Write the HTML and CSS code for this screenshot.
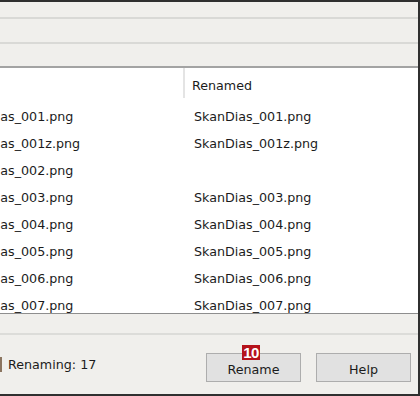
FILE: index.html
```html
<!DOCTYPE html>
<html>
<head>
<meta charset="utf-8">
<link rel="stylesheet" href="styles.css">
</head>
<body>
<div class="window">
  <div class="toolbar">
    <div class="band band1"></div>
    <div class="band band2"></div>
    <div class="band band3"></div>
  </div>
  <div class="list">
    <div class="inner">
      <div class="row header">
        <div class="col orig"></div>
        <div class="col ren head-ren">Renamed</div>
      </div>
      <div class="row"><div class="col orig">SkanDias_001.png</div><div class="col ren">SkanDias_001.png</div></div>
      <div class="row"><div class="col orig">SkanDias_001z.png</div><div class="col ren">SkanDias_001z.png</div></div>
      <div class="row"><div class="col orig">SkanDias_002.png</div><div class="col ren"></div></div>
      <div class="row"><div class="col orig">SkanDias_003.png</div><div class="col ren">SkanDias_003.png</div></div>
      <div class="row"><div class="col orig">SkanDias_004.png</div><div class="col ren">SkanDias_004.png</div></div>
      <div class="row"><div class="col orig">SkanDias_005.png</div><div class="col ren">SkanDias_005.png</div></div>
      <div class="row"><div class="col orig">SkanDias_006.png</div><div class="col ren">SkanDias_006.png</div></div>
      <div class="row"><div class="col orig">SkanDias_007.png</div><div class="col ren">SkanDias_007.png</div></div>
    </div>
  </div>
  <div class="footer">
    <div class="footer-top"></div>
    <div class="footer-main">
      <div class="status"><span class="sep"></span><span>Renaming: 17</span></div>
      <div class="buttons">
        <button class="btn rename">Rename<span class="badge">10</span></button>
        <button class="btn">Help</button>
      </div>
    </div>
  </div>
</div>
</body>
</html>
```
FILE: styles.css
```css
html, body {
  margin: 0;
  padding: 0;
}
body {
  width: 420px;
  height: 396px;
  overflow: hidden;
  font-family: "DejaVu Sans", Verdana, sans-serif;
  font-size: 12.7px;
  color: #1b1b1b;
}
.window {
  box-sizing: border-box;
  width: 420px;
  height: 396px;
  border-top: 2px solid #2f2f2f;
  border-right: 2px solid #2f2f2f;
  border-bottom: 2px solid #2f2f2f;
  background: #f0efec;
  display: flex;
  flex-direction: column;
}
.toolbar {
  display: flex;
  flex-direction: column;
}
.band {
  border-bottom: 2px solid #d9d9d6;
}
.band1 { height: 15px; }
.band2 { height: 23px; }
.band3 { height: 22px; border-bottom: 2px solid #a3a3a3; }
.list {
  background: #fff;
  height: 245px;
  overflow: hidden;
  border-bottom: 1px solid #8e8e8e;
}
.inner {
  margin-left: -50px;
}
.row {
  display: flex;
  height: 27px;
  align-items: center;
  white-space: nowrap;
}
.row.header {
  height: 32px;
  margin-bottom: 3px;
}
.col.orig {
  width: 235px;
  flex: none;
  padding-left: 6px;
  box-sizing: border-box;
}
.header .col.orig {
  height: 30px;
  border-right: 2px solid #e4e4e4;
  align-self: flex-start;
}
.col.ren {
  padding-left: 9px;
}
.header .head-ren {
  padding-left: 7px;
  padding-top: 3px;
}
.footer {
  flex: 1;
  display: flex;
  flex-direction: column;
}
.footer-top {
  height: 19px;
  border-bottom: 2px solid #dcdcd9;
}
.footer-main {
  flex: 1;
  display: flex;
  align-items: flex-start;
  justify-content: space-between;
  padding-top: 18px;
}
.status {
  display: flex;
  align-items: center;
  gap: 6px;
  padding-top: 4px;
}
.sep {
  width: 2px;
  height: 15px;
  background: #8b7560;
}
.buttons {
  display: flex;
  gap: 15px;
  padding-right: 7px;
}
.btn {
  position: relative;
  width: 95px;
  height: 29px;
  box-sizing: border-box;
  border: 1px solid #adadad;
  background: #e1e1e1;
  font-family: "DejaVu Sans", Verdana, sans-serif;
  font-size: 12.7px;
  color: #1b1b1b;
  padding: 3px 0 0 0;
  margin: 0;
}
.badge {
  position: absolute;
  left: 35px;
  top: -9px;
  width: 18px;
  height: 15px;
  background: #b5121b;
  color: #fff;
  font-family: "Liberation Sans", Arial, sans-serif;
  font-weight: bold;
  font-size: 15px;
  line-height: 15px;
  text-align: center;
  letter-spacing: -0.5px;
}
```
